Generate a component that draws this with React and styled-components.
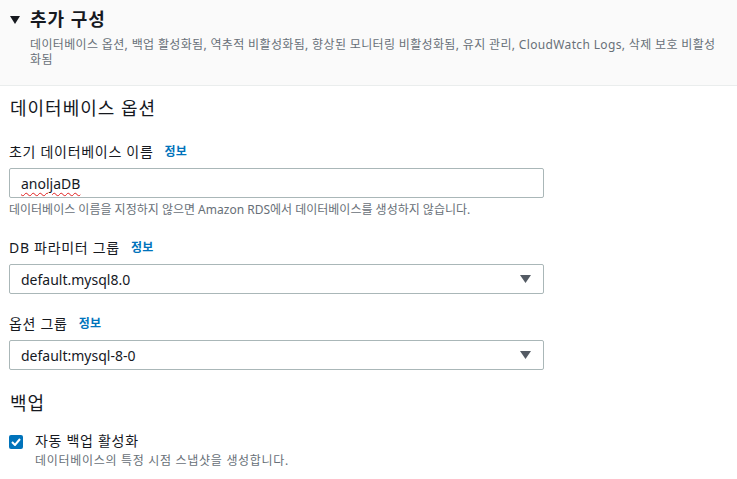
import React from 'react';
import styled, { createGlobalStyle } from 'styled-components';

const GlobalStyle = createGlobalStyle`
  body {
    margin: 0;
    background: #fff;
    font-family: "Noto Sans", "Noto Sans CJK KR", sans-serif;
    color: #16191f;
  }
`;

const Page = styled.div`
  width: 737px;
  height: 479px;
  overflow: hidden;
`;

const Header = styled.div`
  background: #fafafa;
  border-bottom: 1px solid #eaeded;
  height: 86px;
  box-sizing: border-box;
  padding: 8px 10px 0 10px;
  display: flex;
  align-items: flex-start;
  gap: 10px;
`;

const Caret = styled.svg`
  margin-top: 8px;
  flex: none;
`;

const HeaderText = styled.div`
  display: flex;
  flex-direction: column;
`;

const Title = styled.div`
  font-size: 18px;
  font-weight: 700;
  line-height: 22px;
  letter-spacing: 1px;
  color: #16191f;
`;

const Subtitle = styled.div`
  margin-top: 7px;
  font-size: 12px;
  line-height: 15px;
  letter-spacing: 0.35px;
  color: #687078;
  max-width: 690px;
`;

const Body = styled.div`
  padding: 11px 9px 0 9px;
  display: flex;
  flex-direction: column;
`;

const SectionTitle = styled.div`
  font-size: 18px;
  line-height: 22px;
  letter-spacing: 1px;
  color: #16191f;
  padding-left: 1px;
  margin-top: ${(p) => p.$top || 0}px;
`;

const Field = styled.div`
  display: flex;
  flex-direction: column;
  margin-top: ${(p) => p.$top}px;
  width: 535px;
`;

const Label = styled.div`
  font-size: 14px;
  line-height: 20px;
  letter-spacing: 0.7px;
  color: #16191f;
  display: flex;
  align-items: center;
  gap: 11px;
  margin-bottom: 6px;
`;

const Info = styled.span`
  color: #0073bb;
  font-size: 12px;
  font-weight: 700;
  letter-spacing: 0.3px;
`;

const Box = styled.div`
  height: 30px;
  box-sizing: border-box;
  border: 1px solid #aab7b8;
  border-radius: 2px;
  background: #fff;
  display: flex;
  align-items: center;
  justify-content: space-between;
  padding: 0 12px 0 11px;
  font-size: 14px;
  color: #16191f;
`;

const Misspelled = styled.span`
  text-decoration: underline wavy #e02020;
  text-decoration-thickness: 1px;
  text-underline-offset: 3px;
`;

const Help = styled.div`
  font-size: 12px;
  line-height: 16px;
  color: #687078;
  margin-top: 4px;
`;

const CheckRow = styled.div`
  margin-top: 17px;
  display: flex;
  gap: 12px;
  align-items: flex-start;
`;

const Check = styled.div`
  width: 14px;
  height: 14px;
  border-radius: 2px;
  background: #0073bb;
  margin-top: 4px;
  display: flex;
  align-items: center;
  justify-content: center;
  flex: none;
`;

const CheckText = styled.div`
  display: flex;
  flex-direction: column;
`;

const CheckLabel = styled.div`
  font-size: 14px;
  line-height: 20px;
  letter-spacing: 0.7px;
  color: #16191f;
`;

const CheckDesc = styled.div`
  font-size: 12px;
  line-height: 16px;
  letter-spacing: 0.7px;
  margin-top: 2px;
  color: #687078;
`;

const Arrow = () => (
  <svg width="11" height="8" viewBox="0 0 11 8">
    <path d="M0 0 H11 L5.5 8 Z" fill="#545b64" />
  </svg>
);

const Select = ({ value }) => (
  <Box>
    <span>{value}</span>
    <Arrow />
  </Box>
);

export default function App() {
  return (
    <Page>
      <GlobalStyle />
      <Header>
        <Caret width="10" height="8" viewBox="0 0 10 8">
          <path d="M0 0 H10 L5 8 Z" fill="#16191f" />
        </Caret>
        <HeaderText>
          <Title>추가 구성</Title>
          <Subtitle>
            데이터베이스 옵션, 백업 활성화됨, 역추적 비활성화됨, 향상된 모니터링 비활성화됨, 유지 관리, CloudWatch Logs, 삭제 보호 비활성화됨
          </Subtitle>
        </HeaderText>
      </Header>
      <Body>
        <SectionTitle>데이터베이스 옵션</SectionTitle>
        <Field $top={23}>
          <Label>
            초기 데이터베이스 이름 <Info>정보</Info>
          </Label>
          <Box>
            <Misspelled>anoljaDB</Misspelled>
          </Box>
          <Help>데이터베이스 이름을 지정하지 않으면 Amazon RDS에서 데이터베이스를 생성하지 않습니다.</Help>
        </Field>
        <Field $top={20}>
          <Label>
            DB 파라미터 그룹 <Info>정보</Info>
          </Label>
          <Select value="default.mysql8.0" />
        </Field>
        <Field $top={20}>
          <Label>
            옵션 그룹 <Info>정보</Info>
          </Label>
          <Select value="default:mysql-8-0" />
        </Field>
        <SectionTitle $top={22}>백업</SectionTitle>
        <CheckRow>
          <Check>
            <svg width="10" height="8" viewBox="0 0 10 8">
              <path d="M1 4 L4 7 L9 1" stroke="#fff" strokeWidth="2" fill="none" />
            </svg>
          </Check>
          <CheckText>
            <CheckLabel>자동 백업 활성화</CheckLabel>
            <CheckDesc>데이터베이스의 특정 시점 스냅샷을 생성합니다.</CheckDesc>
          </CheckText>
        </CheckRow>
      </Body>
    </Page>
  );
}
